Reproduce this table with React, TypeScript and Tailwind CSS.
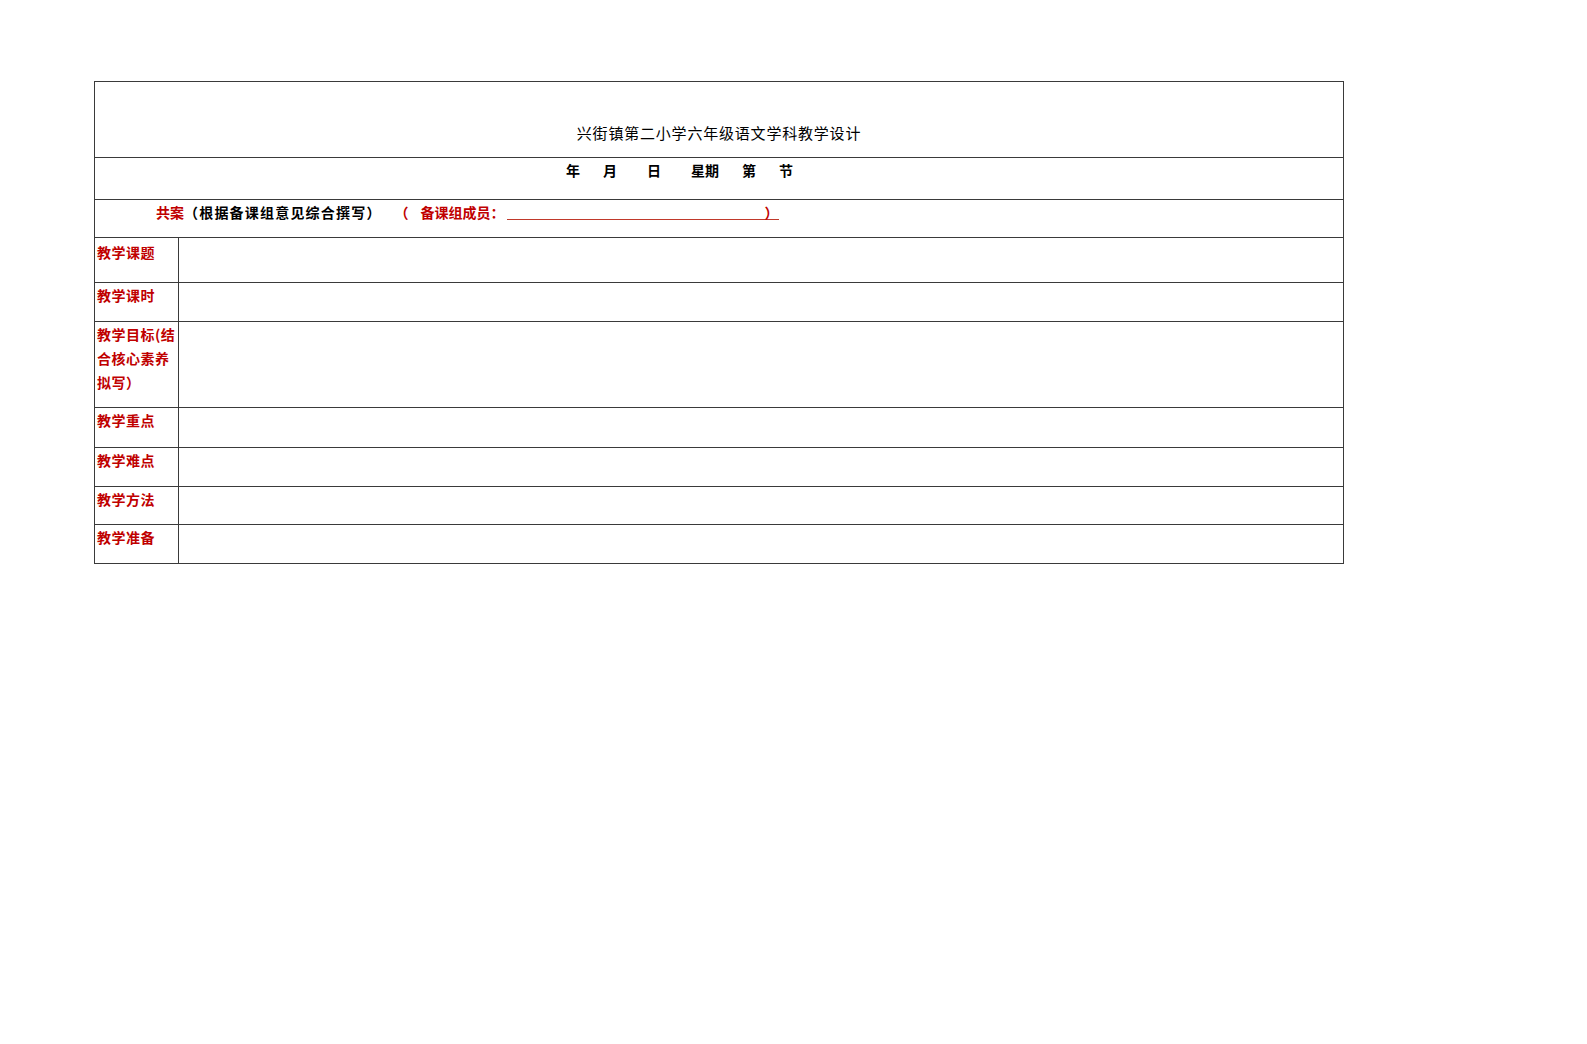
import React from "react";

const labelCls =
  "w-[84px] shrink-0 border-r border-[#3a3a3a] pl-[2px] text-[14px] leading-[24px] font-bold tracking-[0.5px] text-[#c00000]";

function Row({
  label,
  h,
  pt = "pt-0",
  last,
}: {
  label: React.ReactNode;
  h: string;
  pt?: string;
  last?: boolean;
}) {
  return (
    <div className={`flex ${h} ${last ? "" : "border-b border-[#3a3a3a]"}`}>
      <div className={`${labelCls} ${pt}`}>{label}</div>
      <div className="flex-1" />
    </div>
  );
}

export default function App() {
  return (
    <div className="min-h-screen bg-white pt-[81px] pl-[94px] font-['Noto_Sans_CJK_SC','Noto_Sans_CJK_JP',sans-serif] text-black">
      <div className="w-[1250px] border border-[#3a3a3a]">
        {/* Title row */}
        <div className="h-[76px] border-b border-[#3a3a3a] pt-[41px] text-center text-[15px] leading-[20px] tracking-[0.8px]">
          兴街镇第二小学六年级语文学科教学设计
        </div>

        {/* Date row */}
        <div className="flex h-[42px] border-b border-[#3a3a3a] pl-[471px] pt-[2px] text-[14px] font-bold leading-[20px]">
          <span>年</span>
          <span className="ml-[23px]">月</span>
          <span className="ml-[30px]">日</span>
          <span className="ml-[30px]">星期</span>
          <span className="ml-[23px]">第</span>
          <span className="ml-[23px]">节</span>
        </div>

        {/* Shared plan row */}
        <div className="flex h-[38px] items-start border-b border-[#3a3a3a] pl-[61px] pt-[2px] text-[14px] font-bold leading-[20px]">
          <span className="text-[#c00000]">共案</span>
          <span className="tracking-[1.2px]">（根据备课组意见综合撰写）</span>
          <span className="ml-[13px] text-[#c00000]">（</span>
          <span className="ml-[12px] text-[#c00000]">备课组成员：</span>
          <span className="ml-[2px] flex h-[18px] w-[272px] justify-end border-b border-[#c0392b] text-[#c00000]">
            <span className="leading-[20px]">）</span>
          </span>
        </div>

        <Row label="教学课题" h="h-[45px]" pt="pt-[2px]" />
        <Row label="教学课时" h="h-[39px]" />
        <Row
          label={
            <>
              教学目标(结
              <br />
              合核心素养
              <br />
              拟写）
            </>
          }
          h="h-[86px]"
        />
        <Row label="教学重点" h="h-[40px]" />
        <Row label="教学难点" h="h-[39px]" />
        <Row label="教学方法" h="h-[38px]" />
        <Row label="教学准备" h="h-[38px]" last />
      </div>
    </div>
  );
}
